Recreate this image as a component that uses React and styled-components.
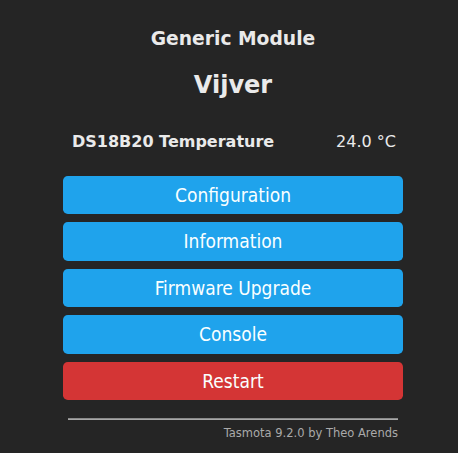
import React from 'react';
import styled, { createGlobalStyle } from 'styled-components';

const GlobalStyle = createGlobalStyle`
  html, body {
    margin: 0;
    padding: 0;
    background: #252525;
  }
  body {
    font-family: "DejaVu Sans", Verdana, sans-serif;
    color: #eaeaea;
  }
`;

const Page = styled.div`
  min-height: 453px;
  padding-left: 63px;
  box-sizing: border-box;
`;

const Panel = styled.div`
  width: 340px;
  padding-top: 28px;
`;

const Header = styled.div`
  text-align: center;
`;

const ModuleName = styled.h3`
  margin: 0;
  font-size: 18.72px;
  line-height: 22px;
  font-weight: bold;
`;

const DeviceName = styled.h2`
  margin: 21px 0 0;
  font-size: 24px;
  line-height: 28px;
  font-weight: bold;
`;

const SensorRow = styled.div`
  display: flex;
  justify-content: space-between;
  margin-top: 33px;
  padding: 0 7px 0 9px;
  font-size: 16px;
  line-height: 20px;
`;

const SensorName = styled.span`
  font-weight: bold;
`;

const SensorValue = styled.span`
  white-space: nowrap;
`;

const Buttons = styled.div`
  display: flex;
  flex-direction: column;
  gap: 8px;
  margin-top: 24px;
`;

const Button = styled.button`
  display: block;
  width: 100%;
  border: 0;
  border-radius: 4.8px;
  padding: 0;
  font-family: "DejaVu Sans Condensed", "DejaVu Sans", sans-serif;
  font-stretch: condensed;
  font-size: 19px;
  line-height: 38.4px;
  color: #faffff;
  background: ${(props) => (props.danger ? '#d43535' : '#1fa3ec')};
  cursor: pointer;
`;

const Footer = styled.div`
  text-align: right;
  font-size: 11.5px;
  margin-top: 18px;
`;

const Rule = styled.hr`
  width: 330px;
  height: 0;
  margin: 0 auto 6px;
  border: 0;
  border-top: 1px solid #8a8a8a;
  border-bottom: 1px solid #a8a8a8;
`;

const Credit = styled.span`
  color: #aaa;
  padding-right: 5px;
`;

const menu = [
  { label: 'Configuration' },
  { label: 'Information' },
  { label: 'Firmware Upgrade' },
  { label: 'Console' },
  { label: 'Restart', danger: true },
];

export default function App() {
  return (
    <Page>
      <GlobalStyle />
      <Panel>
        <Header>
          <ModuleName>Generic Module</ModuleName>
          <DeviceName>Vijver</DeviceName>
        </Header>
        <SensorRow>
          <SensorName>DS18B20 Temperature</SensorName>
          <SensorValue>24.0 °C</SensorValue>
        </SensorRow>
        <Buttons>
          {menu.map((item) => (
            <Button key={item.label} danger={item.danger}>{item.label}</Button>
          ))}
        </Buttons>
        <Footer>
          <Rule />
          <Credit>Tasmota 9.2.0 by Theo Arends</Credit>
        </Footer>
      </Panel>
    </Page>
  );
}
